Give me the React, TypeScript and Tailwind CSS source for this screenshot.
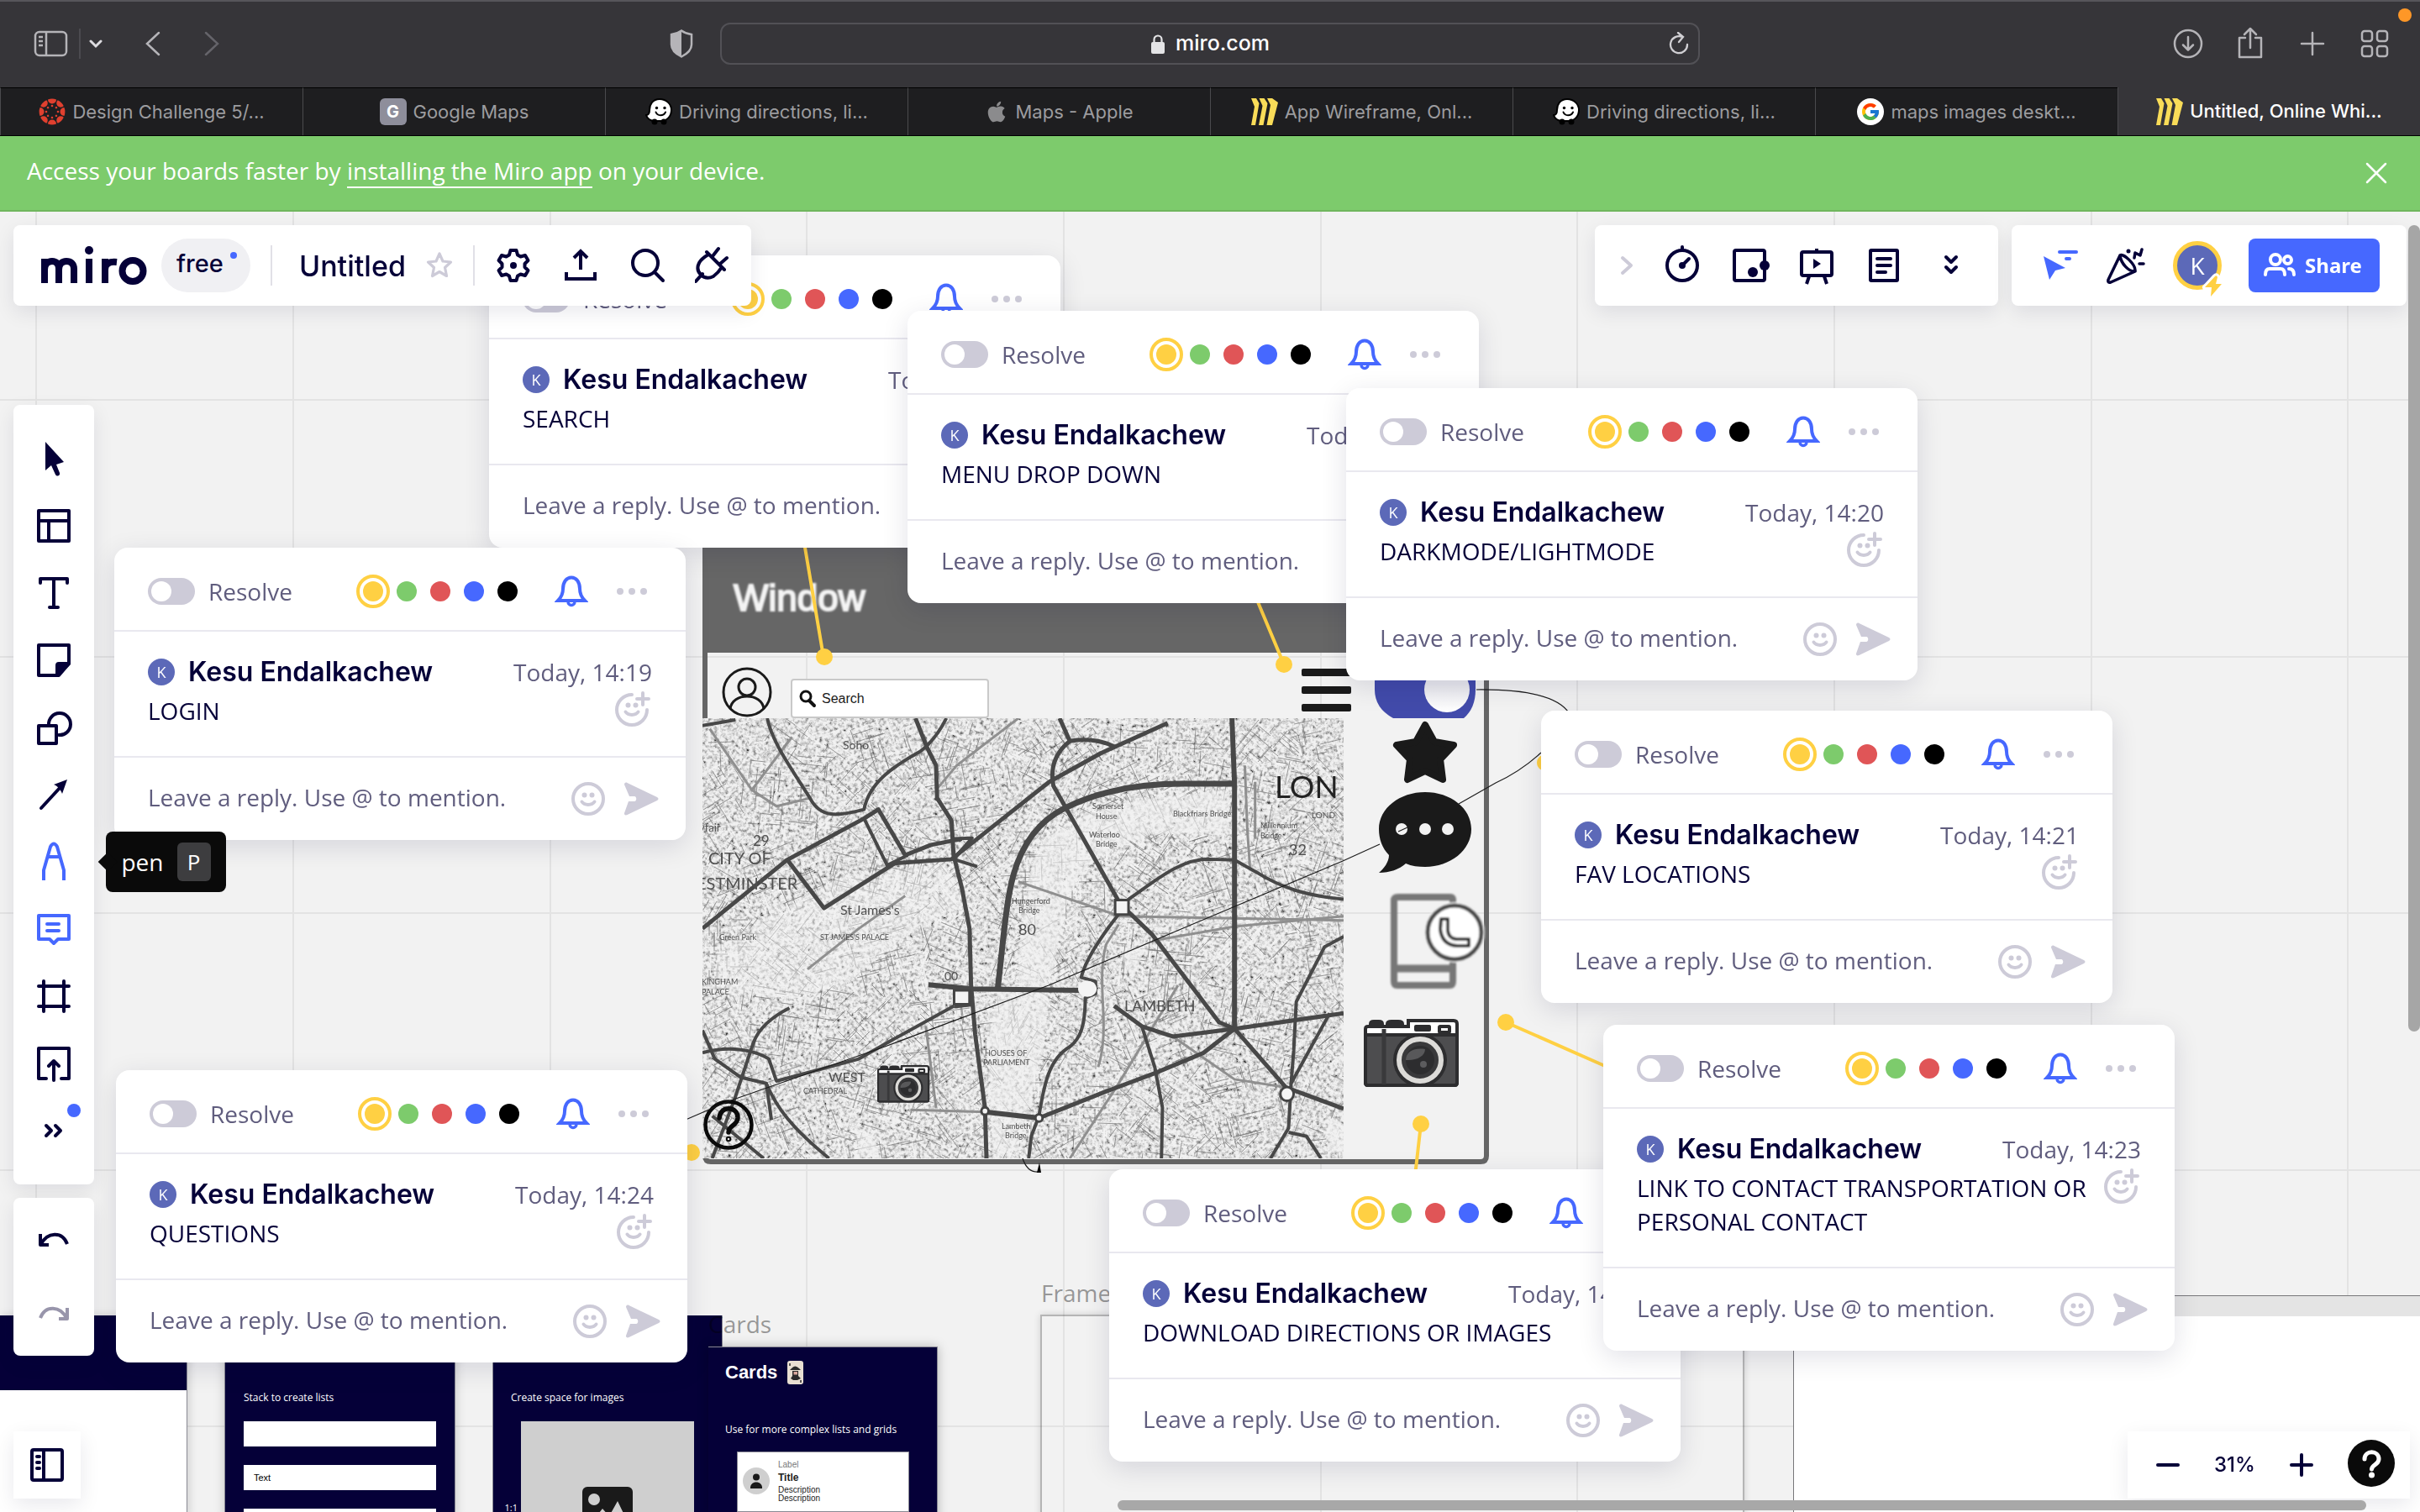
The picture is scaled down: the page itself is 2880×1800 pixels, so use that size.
import type { ReactNode } from "react";
import { FaApple } from "react-icons/fa";
import { FcGoogle } from "react-icons/fc";

const NAVY = "#050038";

type IconProps = { children: ReactNode; className?: string; box?: string };

function Icon({ children, className = "size-12", box = "0 0 48 48" }: IconProps) {
  return (
    <svg
      viewBox={box}
      className={className}
      fill="none"
      stroke="currentColor"
      strokeWidth="4"
      strokeLinecap="round"
      strokeLinejoin="round"
      aria-hidden="true"
    >
      {children}
    </svg>
  );
}

/* ---------- Browser chrome ---------- */

function ChromeButton({ label, children, className = "" }: { label: string; children: ReactNode; className?: string }) {
  return (
    <button type="button" aria-label={label} className={`flex shrink-0 items-center justify-center ${className}`}>
      {children}
    </button>
  );
}

function BrowserBar() {
  return (
    <header className="flex h-[104px] items-center justify-between border-t-2 border-[#57565b] bg-[#363539] pb-0.5 pl-10 pr-9 text-[#b5b4b8]">
      <div className="flex w-[817px] items-center">
        <ChromeButton label="Show sidebar">
          <svg viewBox="0 0 42 32" className="h-8 w-[42px]" fill="none" stroke="currentColor" strokeWidth="2.5">
            <rect x="2" y="2" width="37" height="28" rx="5" />
            <path d="M15 2v28M6 8h5M6 13h5M6 18h5" />
          </svg>
        </ChromeButton>
        <span className="ml-3 h-9 w-0.5 bg-[#4b4a4f]" />
        <ChromeButton label="Tab groups" className="ml-2.5 text-[#dddce0]">
          <svg viewBox="0 0 16 16" className="size-4" fill="none" stroke="currentColor" strokeWidth="3" strokeLinecap="round">
            <path d="M2 5l6 6 6-6" />
          </svg>
        </ChromeButton>
        <ChromeButton label="Back" className="ml-[50px]">
          <svg viewBox="0 0 20 32" className="h-8 w-5" fill="none" stroke="currentColor" strokeWidth="2.5" strokeLinecap="round">
            <path d="M17 3L3 16l14 13" />
          </svg>
        </ChromeButton>
        <ChromeButton label="Forward" className="ml-[50px] text-[#65646a]">
          <svg viewBox="0 0 20 32" className="h-8 w-5" fill="none" stroke="currentColor" strokeWidth="2.5" strokeLinecap="round">
            <path d="M3 3l14 13L3 29" />
          </svg>
        </ChromeButton>
        <ChromeButton label="Privacy report" className="ml-auto mr-8">
          <svg viewBox="0 0 28 34" className="h-[34px] w-7">
            <path d="M14 1.5c4 3 8 4 12 4.500V18c0 7-5 11-12 14.500C7 29 2 25 2 18V6c4-.5 8-1.500 12-4.500z" fill="none" stroke="currentColor" strokeWidth="2.500" />
            <path d="M14 2v30C7 29 2 25 2 18V6c4-.5 8-1.500 12-4z" fill="currentColor" />
          </svg>
        </ChromeButton>
      </div>
      <div className="relative flex h-[50px] flex-1 items-center justify-center gap-3 rounded-xl border-2 border-[#525156] text-white">
        <svg viewBox="0 0 18 24" className="h-6 w-[18px]">
          <rect x="1" y="10" width="16" height="14" rx="2" fill="#e4e4e6" />
          <path d="M4.500 11V7a4.500 4.500 0 019 0v4" fill="none" stroke="#e4e4e6" strokeWidth="2.200" />
        </svg>
        <span className="pb-0.5 text-[25px] font-medium leading-8">miro.com</span>
        <button type="button" aria-label="Reload" className="absolute right-2.5 text-[#d0cfd3]">
          <svg viewBox="0 0 26 28" className="h-7 w-[26px]" fill="none" stroke="currentColor" strokeWidth="2.300" strokeLinecap="round">
            <path d="M23 15a10 10 0 11-6-9M12 1l6 5-5 6" />
          </svg>
        </button>
      </div>
      <div className="flex w-[821px] items-center justify-end gap-[38px]">
        <ChromeButton label="Downloads">
          <Icon className="size-9" box="0 0 36 36">
            <circle cx="18" cy="18" r="16" strokeWidth="2.500" />
            <path d="M18 10v15M12 19.500l6 6 6-6" strokeWidth="2.500" />
          </Icon>
        </ChromeButton>
        <ChromeButton label="Share page">
          <Icon className="h-10 w-9" box="0 0 36 40">
            <path d="M12 13H5v23h26V13h-7M18 25V3M11 9l7-7 7 7" strokeWidth="2.500" />
          </Icon>
        </ChromeButton>
        <ChromeButton label="New tab">
          <Icon className="size-9" box="0 0 36 36">
            <path d="M18 5v26M5 18h26" strokeWidth="2.500" />
          </Icon>
        </ChromeButton>
        <ChromeButton label="Tab overview">
          <Icon className="size-9" box="0 0 36 36">
            <g strokeWidth="2.500">
              <rect x="3" y="3" width="12" height="12" rx="3" />
              <rect x="21" y="3" width="12" height="12" rx="3" />
              <rect x="3" y="21" width="12" height="12" rx="3" />
              <rect x="21" y="21" width="12" height="12" rx="3" />
            </g>
          </Icon>
        </ChromeButton>
      </div>
      <span className="absolute right-2.5 top-2.5 size-4 rounded-full bg-[#fe9727]" />
    </header>
  );
}

function CanvasIcon() {
  const spokes = [0, 45, 90, 135, 180, 225, 270, 315];
  return (
    <svg viewBox="0 0 32 32" className="size-8">
      {spokes.map((a) => (
        <g key={a} transform={`rotate(${a} 16 16)`} fill="#e0402f">
          <path d="M11 1.500a15 15 0 0110 0a5 5 0 01-10 0z" />
          <circle cx="16" cy="9" r="1.300" />
        </g>
      ))}
    </svg>
  );
}

function WazeIcon() {
  return (
    <svg viewBox="0 0 32 32" className="size-8">
      <path d="M17 1C9 1 5 7 5 14c0 4-1 6-4 6 1 4 5 7 10 7h8c7 0 12-6 12-13S25 1 17 1z" fill="#fff" stroke="#000" strokeWidth="2" />
      <circle cx="11" cy="28" r="3.500" />
      <circle cx="22" cy="28" r="3.500" />
      <circle cx="13.500" cy="11.500" r="1.700" />
      <circle cx="23" cy="11.500" r="1.700" />
      <path d="M12.500 16.500c2 5 9 5 11.500 0" fill="none" stroke="#000" strokeWidth="2" strokeLinecap="round" />
    </svg>
  );
}

function MiroFavicon() {
  return (
    <svg viewBox="0 0 32 32" className="size-8" fill="#f9dc58">
      <path d="M0 0h6l3.500 6L5 32H0l4-22zM9.500 0h6l4 6-5 26H9l4.500-23zM19 0h6l7 5-7 27h-6.500L23 8z" />
    </svg>
  );
}

function LetterIcon() {
  return <span className="flex size-8 items-center justify-center rounded-md bg-[#8e8e9b] text-xl font-bold text-white">G</span>;
}

function GoogleIcon() {
  return (
    <span className="flex size-8 items-center justify-center rounded-full bg-white">
      <FcGoogle className="size-6" />
    </span>
  );
}

const tabs: { title: string; icon: ReactNode; active?: boolean }[] = [
  { title: "Design Challenge 5/...", icon: <CanvasIcon /> },
  { title: "Google Maps", icon: <LetterIcon /> },
  { title: "Driving directions, li...", icon: <WazeIcon /> },
  { title: "Maps - Apple", icon: <FaApple className="size-7 text-[#8b8b8d]" /> },
  { title: "App Wireframe, Onl...", icon: <MiroFavicon /> },
  { title: "Driving directions, li...", icon: <WazeIcon /> },
  { title: "maps images deskt...", icon: <GoogleIcon /> },
  { title: "Untitled, Online Whi...", icon: <MiroFavicon />, active: true },
];

function TabStrip() {
  return (
    <nav aria-label="Browser tabs" className="grid h-[58px] grid-cols-8 border-b border-black">
      {tabs.map((t, i) => (
        <button
          key={i}
          type="button"
          className={
            t.active
              ? "flex items-center justify-center gap-2 border-l border-[#4a4a4d] bg-[#363539] text-[22px] font-medium text-white"
              : "flex items-center justify-center gap-2 border-l border-t border-l-[#4a4a4d] border-t-black bg-[#1e1e20] text-[22px] text-[#9c9c9f]"
          }
        >
          {t.icon}
          <span className="whitespace-nowrap">{t.title}</span>
        </button>
      ))}
    </nav>
  );
}

function Banner() {
  return (
    <div className="flex h-[90px] items-center justify-between border-b-2 border-[#70b65e] bg-[#7dcb6c] pl-8 pr-9 font-['Open_Sans','Noto_Sans',sans-serif] text-[28px] text-white">
      <p className="pb-1.5">
        Access your boards faster by{" "}
        <a href="#app" className="border-b-2 border-white">
          installing the Miro app
        </a>{" "}
        on your device.
      </p>
      <button type="button" aria-label="Close banner">
        <Icon className="size-8" box="0 0 32 32">
          <path d="M5 5l22 22M27 5L5 27" strokeWidth="2.500" />
        </Icon>
      </button>
    </div>
  );
}

/* ---------- Comment cards ---------- */

const noteColors = [
  { name: "Yellow", cls: "bg-[#ffd043] outline-[#ffd043]" },
  { name: "Green", cls: "bg-[#7dcb6c] outline-[#7dcb6c]" },
  { name: "Red", cls: "bg-[#e05557] outline-[#e05557]" },
  { name: "Blue", cls: "bg-[#4668ff] outline-[#4668ff]" },
  { name: "Black", cls: "bg-black outline-black" },
];

function Smiley({ plus = false }: { plus?: boolean }) {
  return (
    <svg viewBox="0 0 44 44" className="size-11" fill="none" stroke="currentColor" strokeWidth="4" strokeLinecap="round">
      {plus ? <path d="M22 5A18 18 0 1040 23M35 3v14M28 10h14" /> : <circle cx="22" cy="22" r="18" />}
      <path d="M14.500 25.500c3 4.500 12 4.500 15 0" />
      <circle cx="17.500" cy="17.500" r="3" fill="currentColor" stroke="none" />
      <circle cx="26.500" cy="17.500" r="3" fill="currentColor" stroke="none" />
    </svg>
  );
}

type Comment = { id: string; text: string; time: string; place: string };

const comments: Comment[] = [
  { id: "search", text: "SEARCH", time: "14:19", place: "left-[582px] top-[52px]" },
  { id: "login", text: "LOGIN", time: "14:19", place: "left-[136px] top-[400px]" },
  { id: "menu", text: "MENU DROP DOWN", time: "14:20", place: "left-[1080px] top-[118px]" },
  { id: "dark", text: "DARKMODE/LIGHTMODE", time: "14:20", place: "left-[1602px] top-[210px]" },
  { id: "fav", text: "FAV LOCATIONS", time: "14:21", place: "left-[1834px] top-[594px]" },
  { id: "download", text: "DOWNLOAD DIRECTIONS OR IMAGES", time: "14:22", place: "left-[1320px] top-[1140px]" },
  { id: "link", text: "LINK TO CONTACT TRANSPORTATION OR PERSONAL CONTACT", time: "14:23", place: "left-[1908px] top-[968px]" },
  { id: "questions", text: "QUESTIONS", time: "14:24", place: "left-[138px] top-[1022px]" },
];

function CommentCard({ id, text, time, place }: Comment) {
  return (
    <article
      className={`absolute w-[680px] rounded-2xl bg-white text-[28px] leading-10 text-[#605d7e] shadow-[0_8px_32px_rgba(5,0,56,0.12)] ${place}`}
    >
      <div className="flex h-[100px] items-center border-b-2 border-[#e9e8ef] px-10 pt-1.5">
        <label className="flex items-center gap-4">
          <input
            type="checkbox"
            className="h-8 w-14 appearance-none rounded-full bg-[#cdcbd8] before:ml-1 before:mt-1 before:block before:size-6 before:rounded-full before:bg-white"
          />
          Resolve
        </label>
        <div className="ml-auto mr-9 flex">
          {noteColors.map((c, i) => (
            <input
              key={c.name}
              type="radio"
              name={`color-${id}`}
              aria-label={c.name}
              defaultChecked={i === 0}
              className={`mx-2 size-6 appearance-none rounded-full outline-offset-4 checked:outline-4 ${c.cls}`}
            />
          ))}
        </div>
        <button type="button" aria-label="Notifications" className="mr-7 text-[#4668ff]">
          <svg viewBox="0 0 40 40" className="size-10" fill="none" stroke="currentColor" strokeWidth="4">
            <path d="M4 31c4-4 6-8 6-14 0-8 4-13.500 10-13.500S30 9 30 17c0 6 2 10 6 14z" />
            <path d="M16 32c0 6 8 6 8 0" strokeWidth="3.500" />
          </svg>
        </button>
        <button type="button" aria-label="More" className="flex w-12 justify-center gap-1.5">
          <i className="size-2 rounded-full bg-[#cdcbd8]" />
          <i className="size-2 rounded-full bg-[#cdcbd8]" />
          <i className="size-2 rounded-full bg-[#cdcbd8]" />
        </button>
      </div>
      <div className="px-10 pb-[34px] pt-7">
        <div className="flex items-center">
          <span className="flex size-8 items-center justify-center rounded-full bg-[#5c69b8] text-lg text-white">K</span>
          <span className="ml-4 font-[Inter,sans-serif] text-[32px] font-semibold text-[#050038]">Kesu Endalkachew</span>
          <time className="ml-auto">Today, {time}</time>
        </div>
        <div className="mt-1.5 flex items-start justify-between text-[#050038]">
          <p>{text}</p>
          <button type="button" aria-label="Add reaction" className="-my-1 mr-0.5 text-[#cdcbd8]">
            <Smiley plus />
          </button>
        </div>
      </div>
      <div className="flex h-[100px] items-center border-t-2 border-[#e9e8ef] pl-10 pr-8 text-[#cdcbd8]">
        <input
          aria-label="Reply"
          placeholder="Leave a reply. Use @ to mention."
          className="min-w-0 flex-1 bg-transparent pb-1 placeholder:text-[#605d7e]"
        />
        <button type="button" aria-label="Emoji" className="mr-5">
          <Smiley />
        </button>
        <button type="button" aria-label="Send">
          <svg viewBox="0 0 42 40" className="h-10 w-[42px]" fill="currentColor">
            <path d="M1 3c0-2 1.500-3 3.500-2L40 18c2 1 2 3 0 4L4.500 39C2.500 40 .5 39 1 37l5-14h7c3 0 3-6 0-6H7z" />
          </svg>
        </button>
      </div>
    </article>
  );
}

/* ---------- Board drawing: grid, mock window, map ---------- */

const gridX = [43, 349, 655, 960, 1266, 1572, 1877, 2183, 2489, 2794];
const gridY = [476, 782, 1087, 1393, 1698];

const mainRoads: { d: string; w: number }[] = [
  { d: "M26 960L190 792 340 690 368 668 420 780 470 755 530 740", w: 5 },
  { d: "M152 444C160 500 200 570 235 640 255 690 290 685 340 668 350 600 400 560 450 525 475 500 490 470 500 444", w: 4 },
  { d: "M440 444L462 515 480 560 482 640 510 695 514 780 530 860 545 960 548 1100 556 1220 575 1400 578 1524", w: 5 },
  { d: "M190 790L262 910 400 800 510 790 610 690 700 600 800 530 930 456", w: 5 },
  { d: "M720 444L740 500C700 540 705 590 708 610L780 770 838 900 900 975 1030 1190 1060 1206 1160 1350 1272 1402", w: 5 },
  { d: "M740 500Q790 490 828 515", w: 5 },
  { d: "M600 1105C610 1000 615 900 630 830 650 740 690 690 730 665 800 620 880 605 960 605L1060 605", w: 7 },
  { d: "M1055 444L1060 605 1060 1206", w: 6 },
  { d: "M465 1098L550 1108 760 1112M515 1150L550 1145", w: 6 },
  { d: "M168 1335L330 1280 400 1230 515 1150", w: 4 },
  { d: "M850 892C900 850 950 790 1010 790L1060 792 1100 820C1150 860 1200 880 1272 888", w: 4 },
  { d: "M838 920C800 980 770 1040 762 1080L790 1090 790 1120 770 1130C770 1200 760 1230 740 1250 700 1280 690 1340 680 1420L665 1470 660 1524", w: 4 },
  { d: "M826 1150L880 1200 940 1225 1060 1206 1272 1168", w: 5 },
  { d: "M680 1425L730 1400 810 1360 905 1315 1000 1265 1060 1206", w: 5 },
  { d: "M880 1200L905 1300 920 1400 918 1524", w: 4 },
  { d: "M1245 1168L1170 1340 1165 1450 1130 1524M1165 1460L1200 1470 1228 1524", w: 4 },
  { d: "M26 1265C80 1245 130 1260 155 1280L170 1335M26 1210L50 1280 100 1325 150 1340C170 1400 200 1450 272 1524", w: 4 },
  { d: "M195 1155Q140 1190 125 1240L88 1380 45 1524M150 1340L160 1430M45 1420L145 1524", w: 4 },
  { d: "M575 1410L680 1425", w: 6 },
  { d: "M340 690L385 805 425 780M1272 980L1235 1005 1180 1140 1175 1260 1170 1340", w: 4 },
  { d: "M26 462L90 448M514 740L550 738 514 790 560 808", w: 4 },
];

const lightRoads = [
  "M40 470L122 620 200 490M122 620L170 660 235 640",
  "M640 845L838 930 1272 940M900 990L1060 955 1272 930",
  "M640 444L520 560 480 620",
  "M1080 560L1085 720 1090 810M1100 600L1100 740",
  "M740 1524L830 1350 950 1100",
  "M230 1060L330 960 420 880",
  "M430 1405L575 1410M460 1200L480 1400",
  "M940 1225L1060 1330 1160 1350",
  "M795 1300C820 1200 790 1100 810 1000L835 950",
];

/* Short side streets: each patch of the map has its own street direction. */
function sideStreets(count: number, seed: number) {
  let s = seed;
  const rand = () => {
    s = (s * 1103515245 + 12345) % 2147483648;
    return s / 2147483648;
  };
  let d = "";
  for (let i = 0; i < count; i++) {
    const x = 836 + rand() * 763;
    const y = 855 + rand() * 524;
    const patch = Math.floor(x / 110) * 37 + Math.floor(y / 90) * 61;
    const angle = ((patch % 90) * Math.PI) / 180 + (rand() > 0.5 ? Math.PI / 2 : 0);
    const len = 8 + rand() * 26;
    d += `M${x.toFixed(0)} ${y.toFixed(0)}l${(Math.cos(angle) * len).toFixed(0)} ${(Math.sin(angle) * len).toFixed(0)}`;
  }
  return d;
}

const darkStreets = sideStreets(1500, 11);
const paleStreets = sideStreets(1300, 77);

function Camera({ x, y, scale }: { x: number; y: number; scale: number }) {
  return (
    <g transform={`translate(${x} ${y}) scale(${scale})`}>
      <path d="M6 10V6q0-5 6-5h6q6 0 6 5v4zM26 10V6q0-5 7-5h8q7 0 7 5v4z" fill="#2d2d2f" />
      <path d="M2 12q0-3 3-3h48V2h54q4 0 4 4v70q0 3-3 3H5q-3 0-3-3z" fill="#fff" stroke="#2d2d2f" strokeWidth="4" />
      <path d="M2 19h109v57q0 3-3 3H5q-3 0-3-3z" fill="#4d4d4f" stroke="#2d2d2f" strokeWidth="4" />
      <path d="M24 12v66" stroke="#39393b" strokeWidth="5" />
      <rect x="60" y="7" width="20" height="8" rx="2" fill="#2d2d2f" />
      <rect x="90" y="9" width="12" height="7" rx="1" fill="#fff" stroke="#2d2d2f" strokeWidth="4" />
      <circle cx="67" cy="49" r="32" fill="#2d2d2f" />
      <circle cx="67" cy="49" r="25" fill="#39393b" stroke="#dcdbd8" strokeWidth="6" />
      <circle cx="67" cy="49" r="17" fill="#2d2d2f" />
      <path d="M50 49c0-9 8-15 23-13 0 8-10 14-23 13z" fill="#58585a" />
      <circle cx="71" cy="54" r="4" fill="#5c5c5e" />
    </g>
  );
}

function BoardDrawing() {
  return (
    <svg
      viewBox="0 252 2880 1548"
      className="absolute left-0 top-0 h-[1548px] w-[2880px]"
      fontFamily="Liberation Sans, sans-serif"
      role="img"
      aria-label="Map app wireframe"
    >
      <defs>
        <filter id="blocks" x="0" y="0" width="100%" height="100%">
          <feTurbulence type="fractalNoise" baseFrequency="0.24" numOctaves="3" seed="7" />
          <feColorMatrix values="2 1 0 0 -0.72  2 1 0 0 -0.72  2 1 0 0 -0.72  0 0 0 0 1" />
        </filter>
        <filter id="soft">
          <feGaussianBlur stdDeviation="0.8" />
        </filter>
        <clipPath id="mapClip">
          <rect x="836" y="855" width="763" height="524" />
        </clipPath>
        <linearGradient id="knob" x1="0" x2="0" y1="0" y2="1">
          <stop offset="0.4" stopColor="#e9e9ee" />
          <stop offset="1" stopColor="#ffffff" />
        </linearGradient>
      </defs>

      <g stroke="#e3e3e3" strokeWidth="2">
        {gridX.map((x) => (
          <path key={x} d={`M${x} 252V1800`} />
        ))}
        {gridY.map((y) => (
          <path key={y} d={`M0 ${y}H2880`} />
        ))}
      </g>

      <path d="M839 640V1376q0 7 7 7H1762q7 0 7-7V640" fill="none" stroke="#666" strokeWidth="6" />
      <rect x="836" y="600" width="936" height="177" fill="#666" />
      <text x="873" y="727" fontSize="44" fill="#f4f4f4" stroke="#f4f4f4" strokeWidth="2" filter="url(#soft)">
        Window
      </text>

      <g fill="none" stroke="#1a1a1a" strokeWidth="3">
        <circle cx="889" cy="824" r="28" />
        <circle cx="889" cy="818" r="10" />
        <path d="M869 844c2-20 38-20 40 0" />
      </g>
      <rect x="942" y="809" width="234" height="45" rx="3" fill="#fff" stroke="#c9c9c9" strokeWidth="2" />
      <circle cx="959" cy="829" r="6" fill="none" stroke="#111" strokeWidth="3" />
      <path d="M963 834l6 6" stroke="#111" strokeWidth="4" strokeLinecap="round" />
      <text x="978" y="837" fontSize="16" fill="#1a1a1a">
        Search
      </text>

      <g clipPath="url(#mapClip)">
        <rect x="836" y="855" width="763" height="524" filter="url(#blocks)" />
        <rect x="836" y="855" width="763" height="524" fill="#cccccc" opacity="0.3" />
        <path d={paleStreets} stroke="#f4f4f4" strokeWidth="2" fill="none" opacity="0.8" />
        <path d={darkStreets} stroke="#707070" strokeWidth="1" fill="none" opacity="0.7" />
        <svg x="836" y="855" width="763" height="524" viewBox="26 444 1246 1080" preserveAspectRatio="none">
          <g fill="#f2f2f2" opacity="0.6">
            <path d="M640 1100C640 980 650 850 680 760 730 690 800 660 900 640L1050 620V720L900 730C800 760 740 830 730 930L700 1100 690 1250 640 1500 590 1524 580 1250 600 1110z" />
            <path d="M300 830L500 800 530 900 420 980 300 1100 200 1130 40 1120 60 1000 200 900z" opacity="0.700" />
            <path d="M320 1440L360 1470 370 1524 330 1510zM1240 1420l32 20v84l-30-20zM840 1020l50-20-30 90z" />
          </g>
          <g fill="none" stroke="#8f8f8f" strokeWidth="3">
            {lightRoads.map((d) => (
              <path key={d} d={d} vectorEffect="non-scaling-stroke" />
            ))}
          </g>
          <g fill="none" stroke="#484848" strokeLinejoin="round">
            {mainRoads.map((r) => (
              <path key={r.d} d={r.d} strokeWidth={r.w} vectorEffect="non-scaling-stroke" />
            ))}
          </g>
          <g fill="#f4f4f4" stroke="#444" strokeWidth="3">
            <rect x="828" y="890" width="26" height="36" vectorEffect="non-scaling-stroke" />
            <rect x="515" y="1112" width="30" height="34" vectorEffect="non-scaling-stroke" />
            <ellipse cx="774" cy="1108" rx="18" ry="20" stroke="none" />
            <ellipse cx="1162" cy="1366" rx="13" ry="17" vectorEffect="non-scaling-stroke" />
            <ellipse cx="575" cy="1408" rx="7" ry="9" vectorEffect="non-scaling-stroke" />
            <ellipse cx="680" cy="1425" rx="7" ry="9" vectorEffect="non-scaling-stroke" />
          </g>
        </svg>
        <g fontFamily="Lato, sans-serif" fill="#505050">
          <text x="1517" y="950" fontSize="37" fill="#222">LON</text>
          <text x="1561" y="974" fontSize="10">LOND</text>
          <text x="843" y="1029" fontSize="20">CITY OF</text>
          <text x="829" y="1059" fontSize="20">ESTMINSTER</text>
          <text x="896" y="1007" fontSize="17">29</text>
          <text x="1000" y="1089" fontSize="16">St James&#39;s</text>
          <text x="1003" y="892" fontSize="14">Soho</text>
          <text x="1338" y="1204" fontSize="18">LAMBETH</text>
          <text x="1212" y="1113" fontSize="18">80</text>
          <text x="1124" y="1167" fontSize="14">00</text>
          <text x="986" y="1288" fontSize="16">WEST</text>
          <text x="1534" y="1018" fontSize="18">32</text>
          <text x="832" y="990" fontSize="13">yfair</text>
          <g fontSize="9">
            <text x="856" y="1119">Green Park</text>
            <text x="976" y="1119">ST JAMES&#39;S PALACE</text>
            <text x="829" y="1172">CKINGHAM</text>
            <text x="835" y="1184">PALACE</text>
            <text x="1172" y="1257">HOUSES OF</text>
            <text x="1170" y="1268">PARLIAMENT</text>
            <text x="956" y="1302">CATHEDRAL</text>
            <text x="1204" y="1076">Hungerford</text>
            <text x="1212" y="1087">Bridge</text>
            <text x="1300" y="963">Somerset</text>
            <text x="1304" y="975">House</text>
            <text x="1296" y="997">Waterloo</text>
            <text x="1304" y="1008">Bridge</text>
            <text x="1396" y="972">Blackfriars Bridge</text>
            <text x="1500" y="986">Millennium</text>
            <text x="1500" y="998">Bridge</text>
            <text x="1192" y="1344">Lambeth</text>
            <text x="1196" y="1355">Bridge</text>
          </g>
        </g>
      </g>

      <g fill="none" stroke="#0b0b0b" strokeWidth="4.500">
        <circle cx="867" cy="1339" r="27.500" />
        <path d="M856 1331c1-16 23-14 22 0-1 10-11 8-11 17" strokeWidth="5.500" strokeLinecap="round" />
        <circle cx="867" cy="1356" r="1" />
      </g>

      <g fill="none" stroke="#1c1c1c" strokeWidth="1.200">
        <path d="M816 1333L867 1311 1053 1246 1248 1173 1408 1105 1598 1025 1642 1005M1736 957L1780 932Q1810 918 1834 896" />
        <path d="M1757 821Q1850 820 1868 850" />
        <path d="M1217 1379q6 18 20 16" />
      </g>
      <path d="M1237 1384l2 12h-5z" />

      <g fill="#1a1a1a">
        <rect x="1549" y="796" width="59" height="9" rx="2" />
        <rect x="1549" y="817" width="59" height="9" rx="2" />
        <rect x="1549" y="838" width="59" height="9" rx="2" />
        <path
          d="M1696 863l11 20 23 4-16 17 3 24-21-10-21 10 3-24-16-17 23-4z"
          stroke="#1a1a1a"
          strokeWidth="8"
          strokeLinejoin="round"
        />
        <path d="M1641 987c0-25 25-44 55-44s55 19 55 44-25 45-55 45c-8 0-16-1-23-4-8 7-19 11-32 11 6-5 12-13 12-21-8-8-12-19-12-31z" />
      </g>
      <g fill="#f2f2f2">
        <circle cx="1668" cy="987" r="7" />
        <circle cx="1696" cy="987" r="7" />
        <circle cx="1723" cy="987" r="7" />
      </g>
      <path d="M1664 990l11-5" stroke="#1c1c1c" strokeWidth="1.200" />
      <path d="M1636 810h120v11q0 22-14 34h-84q-22-12-22-34z" fill="#424bab" />
      <circle cx="1722" cy="821" r="27" fill="url(#knob)" />

      <g filter="url(#soft)">
        <path d="M1664 1068h62q3 0 3 4v96q0 5-4 5h-62q-4 0-4-5v-96q0-4 5-4z" fill="none" stroke="#777" strokeWidth="8" />
        <path d="M1660 1153h69" stroke="#777" strokeWidth="9" />
        <circle cx="1731" cy="1110" r="36" fill="#f2f2f2" />
        <circle cx="1731" cy="1110" r="32" fill="#fff" stroke="#4a4a4a" strokeWidth="5" />
        <path
          d="M1715 1094h8v14q1 9 10 10h15v8h-14q-18-1-20-20z"
          fill="none"
          stroke="#2b2b2b"
          strokeWidth="4"
          strokeLinejoin="round"
        />
      </g>
      <Camera x={1623} y={1213} scale={1} />
      <Camera x={1044} y={1268} scale={0.55} />

      <g stroke="#ffd043" strokeWidth="4" fill="#ffd043">
        <path d="M956 640L980 782M1490 700L1528 791M1691 1338L1684 1400M1792 1217L1910 1269" />
        <g stroke="none">
          <circle cx="981" cy="782" r="10" />
          <circle cx="1528" cy="791" r="10" />
          <circle cx="1691" cy="1338" r="10" />
          <circle cx="1792" cy="1217" r="10" />
          <circle cx="823" cy="1372" r="10" />
          <circle cx="1839" cy="908" r="10" />
        </g>
      </g>
    </svg>
  );
}

function Frames() {
  return (
    <div className="text-xs text-white">
      <section className="absolute left-0 top-[1314px] h-60 w-[223px] border-r border-[#8a8a94] bg-white shadow-[2px_0_10px_rgba(0,0,0,0.15)]">
        <div className="h-[89px] bg-[#050038]" />
      </section>
      <section className="absolute left-[267px] top-[1314px] flex h-60 w-[275px] flex-col gap-[22px] border-x border-[#8a8a94] bg-[#050038] px-[22px] pt-[90px] shadow-[0_0_12px_rgba(0,0,0,0.2)]">
        <p className="-mb-0.5 leading-4">Stack to create lists</p>
        <div className="h-[30px] shrink-0 bg-white" />
        <div className="flex h-[30px] shrink-0 items-center bg-white pl-3 font-['Liberation_Sans',sans-serif] text-[11px] text-black">
          Text
        </div>
        <div className="h-[30px] shrink-0 bg-white" />
      </section>
      <section className="absolute left-[586px] top-[1314px] h-60 w-[274px] border-x border-[#8a8a94] bg-[#050038] pl-[21px] pt-[90px]">
        <p className="leading-4">Create space for images</p>
        <div className="-ml-4 mt-5 flex items-start gap-1">
          <span className="w-6 pt-[96px] text-right text-[11px]">1:1</span>
          <div className="flex h-32 w-[206px] justify-center bg-[#cfcfcf] pt-[78px]">
            <svg viewBox="0 0 60 50" className="h-[50px] w-[60px]">
              <rect width="60" height="50" rx="6" fill="#1a1a1a" />
              <circle cx="14" cy="15" r="7" fill="#cfcfcf" />
              <path d="M8 46l16-20 8 9 10-18 14 29z" fill="#cfcfcf" />
            </svg>
          </div>
        </div>
      </section>
      <section className="absolute left-[843px] top-[1351px] h-52 w-[273px] border-r border-t border-[#8a8a94] bg-[#050038] pl-5 shadow-[0_0_12px_rgba(0,0,0,0.25)]">
        <h2 className="flex items-center gap-3 pt-3.5 font-['Liberation_Sans',sans-serif] text-[22px] font-bold leading-8">
          Cards
          <svg viewBox="0 0 19 28" className="h-7 w-[19px]">
            <rect width="19" height="28" rx="3" fill="#e9dfd2" />
            <path d="M5 9q4-5 9 0l2 2H3zM6 12h7v6l3 3-4 2H7l-3-2 2-3z" fill="#2b2b2b" />
            <path d="M7.500 13h4.500v3.500h-4.500z" fill="#d9a79c" />
            <path d="M3 3v3M16 23v3" stroke="#2b2b2b" strokeWidth="1.500" />
          </svg>
        </h2>
        <p className="mt-11 leading-4">Use for more complex lists and grids</p>
        <div className="ml-3.5 mt-[18px] flex h-[72px] w-[205px] gap-2.5 border border-[#8a8a94] bg-white pl-1.5 pt-2.5 font-['Liberation_Sans',sans-serif] text-[10px] leading-[10px] text-[#222]">
          <span className="mt-2 flex size-8 shrink-0 items-center justify-center rounded-full bg-[#cfcfcf]">
            <svg viewBox="0 0 16 18" className="h-[18px] w-4" fill="#1a1a1a">
              <circle cx="8" cy="4.500" r="4" />
              <path d="M1 18c-1-10 15-10 14 0z" />
            </svg>
          </span>
          <div>
            <p className="text-[#777]">Label</p>
            <p className="mt-1 text-xs font-bold leading-3">Title</p>
            <p className="mt-1">Description</p>
            <p>Description</p>
          </div>
        </div>
      </section>
      <p className="absolute left-[843px] top-[1306px] text-[28px] leading-9 text-black/40">Cards</p>
      <p className="absolute left-[1239px] top-[1269px] text-[28px] leading-9 text-black/40">Frame 1</p>
      <section className="absolute left-[1238px] top-[1313px] h-64 w-[838px] border-2 border-black/25 shadow-[0_0_8px_rgba(0,0,0,0.15)]" />
      <section className="absolute left-[2134px] top-[1290px] h-72 w-[800px] border border-[#77777a] bg-[#e4e4e4] pt-6">
        <div className="h-full bg-white" />
      </section>
    </div>
  );
}

/* ---------- Toolbars ---------- */

function Tool({ label, className = "text-[#050038]", children }: { label: string; className?: string; children: ReactNode }) {
  return (
    <button type="button" aria-label={label} className={`flex size-20 shrink-0 items-center justify-center ${className}`}>
      <Icon>{children}</Icon>
    </button>
  );
}

const panel = "pointer-events-auto flex items-center rounded-lg bg-white shadow-[0_8px_24px_rgba(5,0,56,0.09)]";

function TopBar() {
  return (
    <div className="flex items-start justify-between">
      <div className={`${panel} h-24 w-[878px] pl-8`}>
        <svg viewBox="0 0 128 46" className="h-[46px] w-32" fill="none" stroke={NAVY} strokeWidth="8" strokeLinecap="butt" role="img" aria-label="miro">
          <path d="M5 44V15M5 28c0-7 4-10 9-10s8 3 8 9v17M22 28c0-7 4-10 9-10s9 3 9 9v17M58 15v29M77 44V15M77 28c0-7 5-10 14-9" />
          <circle cx="110" cy="29.500" r="12.500" />
          <circle cx="58" cy="5" r="5" fill={NAVY} stroke="none" />
        </svg>
        <button
          type="button"
          className="relative ml-4 h-16 w-[106px] rounded-full bg-[#f0f0f3] pb-1 pl-[18px] text-left font-[Inter,sans-serif] text-[29px] font-medium text-[#050038]"
        >
          free
          <i className="absolute right-4 top-4 size-2 rounded-full bg-[#4668ff]" />
        </button>
        <span className="ml-6 h-12 w-0.5 bg-[#e1e0e7]" />
        <h1 className="ml-8 font-[Inter,sans-serif] text-[34px] font-medium text-[#050038]">Untitled</h1>
        <button type="button" aria-label="Star this board" className="ml-[22px] text-[#cdcbd8]">
          <Icon className="size-9" box="0 0 36 36">
            <path d="M18 4l4 9 9.500 1-7 6.500 2 10L18 25.500l-8.500 5 2-10-7-6.500 9.500-1z" strokeWidth="3.200" />
          </Icon>
        </button>
        <span className="ml-[22px] h-12 w-0.5 bg-[#e1e0e7]" />
        <div className="ml-1.5 flex">
          <Tool label="Settings">
            <path d="M20.500 6h7l1.500 5.500 3.500 2 5.500-1.500 3.500 6-4 4v4l4 4-3.500 6-5.500-1.500-3.500 2L27.500 42h-7L19 36.500l-3.500-2L10 36l-3.500-6 4-4v-4l-4-4L10 12l5.500 1.500 3.500-2z" />
            <circle cx="24" cy="24" r="4" fill="currentColor" stroke="none" />
          </Tool>
          <Tool label="Export">
            <path d="M7 32v8h34v-8M24 29V8M16 15l8-8 8 8" strokeLinecap="butt" strokeLinejoin="miter" />
          </Tool>
          <Tool label="Search">
            <circle cx="21" cy="21" r="15" />
            <path d="M32 32l10 10" />
          </Tool>
          <Tool label="Apps">
            <g transform="translate(-5 0)">
              <path d="M6 43l8-9M19 8l21 21M21 11c-5 3-9 6-11 10-3 6-2 10 2 14s9 5 15 2c4-3 7-6 10-11M26 13l7-9M35 22l8-7" />
            </g>
          </Tool>
        </div>
      </div>
      <div className="flex gap-4">
        <div className={`${panel} h-24 w-[480px] pr-4`}>
          <button type="button" aria-label="Expand" className="flex w-16 justify-center pl-3 text-[#cdcbd8]">
            <Icon className="size-9" box="0 0 36 36">
              <path d="M13 9l10 9-10 9" />
            </Icon>
          </button>
          <Tool label="Timer">
            <circle cx="24" cy="24" r="18" />
            <circle cx="24" cy="24" r="4" fill="currentColor" stroke="none" />
            <path d="M24 24l8-8M24 6V2" />
          </Tool>
          <Tool label="Voting">
            <rect x="6" y="6" width="36" height="36" rx="2" />
            <circle cx="42" cy="24" r="6" fill="currentColor" stroke="none" />
            <circle cx="28" cy="32" r="6" fill="currentColor" stroke="none" />
          </Tool>
          <Tool label="Presentation">
            <rect x="6" y="8" width="36" height="28" rx="2" />
            <path d="M24 8V4M15 37l-3 9M33 37l3 9" strokeLinecap="butt" />
            <path d="M20 16l9 6-9 6z" fill="currentColor" stroke="none" />
          </Tool>
          <Tool label="Notes">
            <rect x="8" y="6" width="32" height="36" rx="1" />
            <path d="M16 16h16M16 24h16M16 32h10" />
          </Tool>
          <Tool label="More apps">
            <path d="M18 14l6 6 6-6M18 26l6 6 6-6" />
          </Tool>
        </div>
        <div className={`${panel} h-24 pl-4 pr-8`}>
          <Tool label="Hide cursors" className="text-[#4668ff]">
            <path d="M6 13l26 14-12 3-7 11z" fill="currentColor" stroke="none" />
            <path d="M25 8h20M33 16h4" />
          </Tool>
          <Tool label="Reactions">
            <path
              d="M17 12L3 41q-1 4 3 3l29-13M17 12c4-3 19 11 18 19-7 1-17-9-18-19zM40 22h5M34 15l1-6 6 3 2-7"
              strokeWidth="3.500"
            />
            <circle cx="27" cy="7" r="2.500" fill="currentColor" stroke="none" />
          </Tool>
          <button
            type="button"
            aria-label="Account"
            className="relative ml-4 flex size-[58px] items-center justify-center rounded-full border-[5px] border-[#ffd043] bg-[#5c69b8] text-[28px] text-white"
          >
            K
            <svg viewBox="0 0 28 34" className="absolute -bottom-3.5 -right-2 h-[34px] w-7 overflow-visible">
              <path d="M17 9L5 22h8l-1 11 13-15h-7l2-8q-1-3-3-1z" fill="none" stroke="#fff" strokeWidth="6" strokeLinejoin="round" />
              <path d="M17 9L5 22h8l-1 11 13-15h-7l2-8q-1-3-3-1z" fill="#ffd043" stroke="none" />
            </svg>
          </button>
          <button
            type="button"
            className="ml-8 flex h-16 w-[156px] items-center justify-center gap-2.5 rounded-lg bg-[#4668ff] pr-1 font-['Noto_Sans',sans-serif] text-2xl font-bold text-white"
          >
            <svg viewBox="0 0 40 30" className="h-[30px] w-10" fill="none" stroke="currentColor" strokeWidth="4" strokeLinecap="round">
              <circle cx="15" cy="8" r="6" />
              <circle cx="29.500" cy="8.500" r="4.500" />
              <path d="M3 26c0-5 2-7 5-7h13c3 0 5 2 5 7M31 19c4 0 6 2 6 7" />
            </svg>
            Share
          </button>
        </div>
      </div>
    </div>
  );
}

function SideBar() {
  return (
    <div className="mt-[118px] flex w-24 flex-col gap-4">
      <div className={`${panel} flex-col py-6`}>
        <Tool label="Select">
          <path d="M14 4v34l7-6 5 11c2 3 6 1 5-2l-4-10 9-3z" fill="currentColor" stroke="none" />
        </Tool>
        <Tool label="Templates">
          <path d="M6 6h36v36H6zM6 18h36M18 18v24" />
        </Tool>
        <Tool label="Text">
          <path d="M8 12V7h32v5M24 7v34M19 41h10" />
        </Tool>
        <Tool label="Sticky note">
          <path d="M6 6h36v22L30 42H6z" />
          <path d="M28 42V30q0-2 2-2h12z" fill="currentColor" />
        </Tool>
        <Tool label="Shape">
          <rect x="6" y="22" width="21" height="21" />
          <path d="M18 21a13 13 0 1112 12" />
        </Tool>
        <Tool label="Connection line">
          <path d="M9 40L32 15" />
          <path d="M40 6L24 12c3 1 8 5 10 11z" fill="currentColor" stroke="none" />
        </Tool>
        <div className="relative">
          <Tool label="Pen" className="text-[#4668ff]">
            <path d="M12 46V34L20 6q4-7 8 0l8 28v12M18 18h12" strokeLinecap="butt" />
          </Tool>
          <div
            role="tooltip"
            className="absolute left-[102px] top-1 z-10 flex h-[72px] w-[143px] items-center justify-center gap-4 rounded-lg bg-[#0a0a0a] text-[28px] text-white"
          >
            <i className="absolute -left-1.5 top-7 size-4 rotate-45 bg-[#0a0a0a]" />
            <span>pen</span>
            <kbd className="flex h-[46px] w-10 items-center justify-center rounded-md bg-[#3d3d3f] font-['Open_Sans','Noto_Sans',sans-serif] text-[26px]">
              P
            </kbd>
          </div>
        </div>
        <Tool label="Comment" className="text-[#4668ff]">
          <path d="M6 8h36v28H29l-5 5-5-5H6z" />
          <path d="M16 18h14M16 26h14" />
        </Tool>
        <Tool label="Frame">
          <path d="M12 6v36M36 6v36M6 12h36M6 36h36" />
        </Tool>
        <Tool label="Upload">
          <path d="M15 42H6V6h36v36h-9M24 44V21M18 27l6-6 6 6" />
        </Tool>
        <div className="relative">
          <Tool label="More tools">
            <path d="M15 18l6 6-6 6M26 18l6 6-6 6" />
          </Tool>
          <i className="absolute right-2 top-2 size-4 rounded-full bg-[#4668ff]" />
        </div>
      </div>
      <div className={`${panel} h-[188px] flex-col justify-center gap-2`}>
        <Tool label="Undo">
          <path d="M8 17v13h10M9 29C16 15 34 13 40 29" strokeLinecap="butt" />
        </Tool>
        <Tool label="Redo" className="text-[#9895ab]">
          <path d="M40 17v13H30M39 29C32 15 14 13 8 29" strokeLinecap="butt" />
        </Tool>
      </div>
    </div>
  );
}

function BottomBar() {
  return (
    <div className="-mr-1 mt-auto flex items-end justify-between">
      <div className={`${panel} size-20 rounded-none`}>
        <Tool label="Board panel">
          <rect x="6" y="6" width="36" height="36" rx="2" />
          <path d="M20 6v36M12 14h3M12 21h3M12 28h3" />
        </Tool>
      </div>
      <div className={`${panel} h-20 w-[336px] justify-between rounded-none pl-2 pr-[18px]`}>
        <Tool label="Zoom out">
          <path d="M12 24h24" strokeWidth="4" />
        </Tool>
        <button type="button" className="font-[Inter,sans-serif] text-2xl font-medium text-[#050038]">
          31%
        </button>
        <Tool label="Zoom in">
          <path d="M12 24h24M24 12v24" />
        </Tool>
        <button
          type="button"
          aria-label="Help"
          className="-mt-1 flex size-14 items-center justify-center rounded-full bg-[#0a0a0a] text-white"
        >
          <svg viewBox="0 0 56 56" className="size-14" fill="none" stroke="currentColor" strokeWidth="5" strokeLinecap="round">
            <path d="M20 23c0-11 17-11 17 0 0 7-8 6-8.500 12" />
            <circle cx="28.500" cy="42" r="3.500" fill="currentColor" stroke="none" />
          </svg>
        </button>
      </div>
    </div>
  );
}

function Board() {
  return (
    <main className="relative min-h-[1548px] flex-1 overflow-hidden bg-[#f2f2f2] font-['Open_Sans','Noto_Sans',sans-serif]">
      <BoardDrawing />
      <Frames />
      {comments.map((c) => (
        <CommentCard key={c.id} {...c} />
      ))}
      <div className="pointer-events-none absolute inset-0 flex flex-col p-4">
        <TopBar />
        <SideBar />
        <BottomBar />
      </div>
      <i className="absolute right-0 top-4 h-[960px] w-3.5 rounded-full bg-[#a6a6a6]" />
      <i className="absolute bottom-0.5 left-[1330px] right-16 h-3 rounded-full bg-[#a8a8a8]" />
    </main>
  );
}

export default function App() {
  return (
    <div className="relative flex min-h-screen flex-col overflow-hidden font-[Inter,sans-serif]">
      <BrowserBar />
      <TabStrip />
      <Banner />
      <Board />
    </div>
  );
}
